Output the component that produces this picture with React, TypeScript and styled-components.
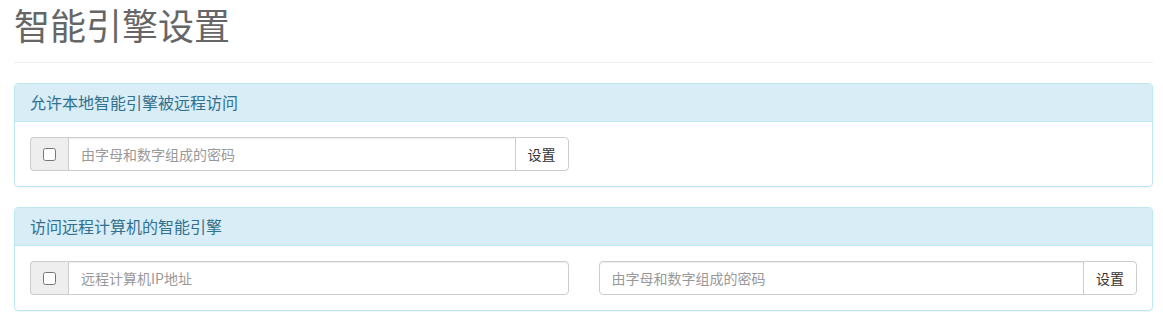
import styled, { createGlobalStyle } from "styled-components";

const GlobalStyle = createGlobalStyle`
  html, body {
    margin: 0;
    padding: 0;
    background: #fff;
  }
  body {
    font-family: "Noto Sans CJK SC", "Liberation Sans", sans-serif;
    font-size: 14px;
    color: #333;
  }
  * { box-sizing: border-box; }
`;

const Wrapper = styled.div`
  padding: 0 10px 0 14px;
`;

const PageHeader = styled.div`
  padding: 4px 0 18px;
  border-bottom: 1px solid #eee;
  margin-bottom: 20px;
`;

const Title = styled.h1`
  margin: 0;
  font-size: 36px;
  font-weight: 400;
  line-height: 40px;
  color: #666;
`;

const Panel = styled.div`
  border: 1px solid #bce8f1;
  border-radius: 4px;
  margin-bottom: 20px;
  box-shadow: 0 1px 1px rgba(0, 0, 0, 0.05);
`;

const PanelHeading = styled.div`
  background: #d9edf7;
  border-bottom: 1px solid #bce8f1;
  border-radius: 3px 3px 0 0;
  padding: 9px 15px 10px;
  color: #31708f;
  font-size: 16px;
  line-height: 18px;
`;

const PanelBody = styled.div`
  padding: 15px;
`;

const Row = styled.div`
  display: grid;
  grid-template-columns: 1fr 1fr;
  column-gap: 30px;
`;

const InputGroup = styled.div`
  display: flex;
  height: 34px;
`;

const Addon = styled.span`
  width: 38px;
  flex: none;
  display: flex;
  align-items: center;
  justify-content: center;
  background: #eee;
  border: 1px solid #ccc;
  border-right: none;
  border-radius: 4px 0 0 4px;
  input {
    margin: 0;
    width: 13px;
    height: 13px;
  }
`;

const TextInput = styled.input<{ $left?: boolean; $right?: boolean }>`
  flex: 1;
  min-width: 0;
  height: 34px;
  padding: 6px 12px;
  font-family: inherit;
  font-size: 14px;
  color: #555;
  border: 1px solid #ccc;
  border-radius: ${(p) =>
    `${p.$left ? 0 : 4}px ${p.$right ? 0 : 4}px ${p.$right ? 0 : 4}px ${p.$left ? 0 : 4}px`};
  box-shadow: inset 0 1px 1px rgba(0, 0, 0, 0.075);
  outline: none;
  &::placeholder {
    color: #999;
  }
`;

const Button = styled.button`
  flex: none;
  height: 34px;
  padding: 6px 12px;
  margin-left: -1px;
  font-family: inherit;
  font-size: 14px;
  line-height: 20px;
  color: #333;
  background: #fff;
  border: 1px solid #ccc;
  border-radius: 0 4px 4px 0;
`;

function CheckAddon() {
  return (
    <Addon>
      <input type="checkbox" />
    </Addon>
  );
}

export default function App() {
  return (
    <Wrapper>
      <GlobalStyle />
      <PageHeader>
        <Title>智能引擎设置</Title>
      </PageHeader>
      <Panel>
        <PanelHeading>允许本地智能引擎被远程访问</PanelHeading>
        <PanelBody>
          <Row>
            <InputGroup>
              <CheckAddon />
              <TextInput $left $right placeholder="由字母和数字组成的密码" />
              <Button>设置</Button>
            </InputGroup>
          </Row>
        </PanelBody>
      </Panel>
      <Panel>
        <PanelHeading>访问远程计算机的智能引擎</PanelHeading>
        <PanelBody>
          <Row>
            <InputGroup>
              <CheckAddon />
              <TextInput $left placeholder="远程计算机IP地址" />
            </InputGroup>
            <InputGroup>
              <TextInput $right placeholder="由字母和数字组成的密码" />
              <Button>设置</Button>
            </InputGroup>
          </Row>
        </PanelBody>
      </Panel>
    </Wrapper>
  );
}
